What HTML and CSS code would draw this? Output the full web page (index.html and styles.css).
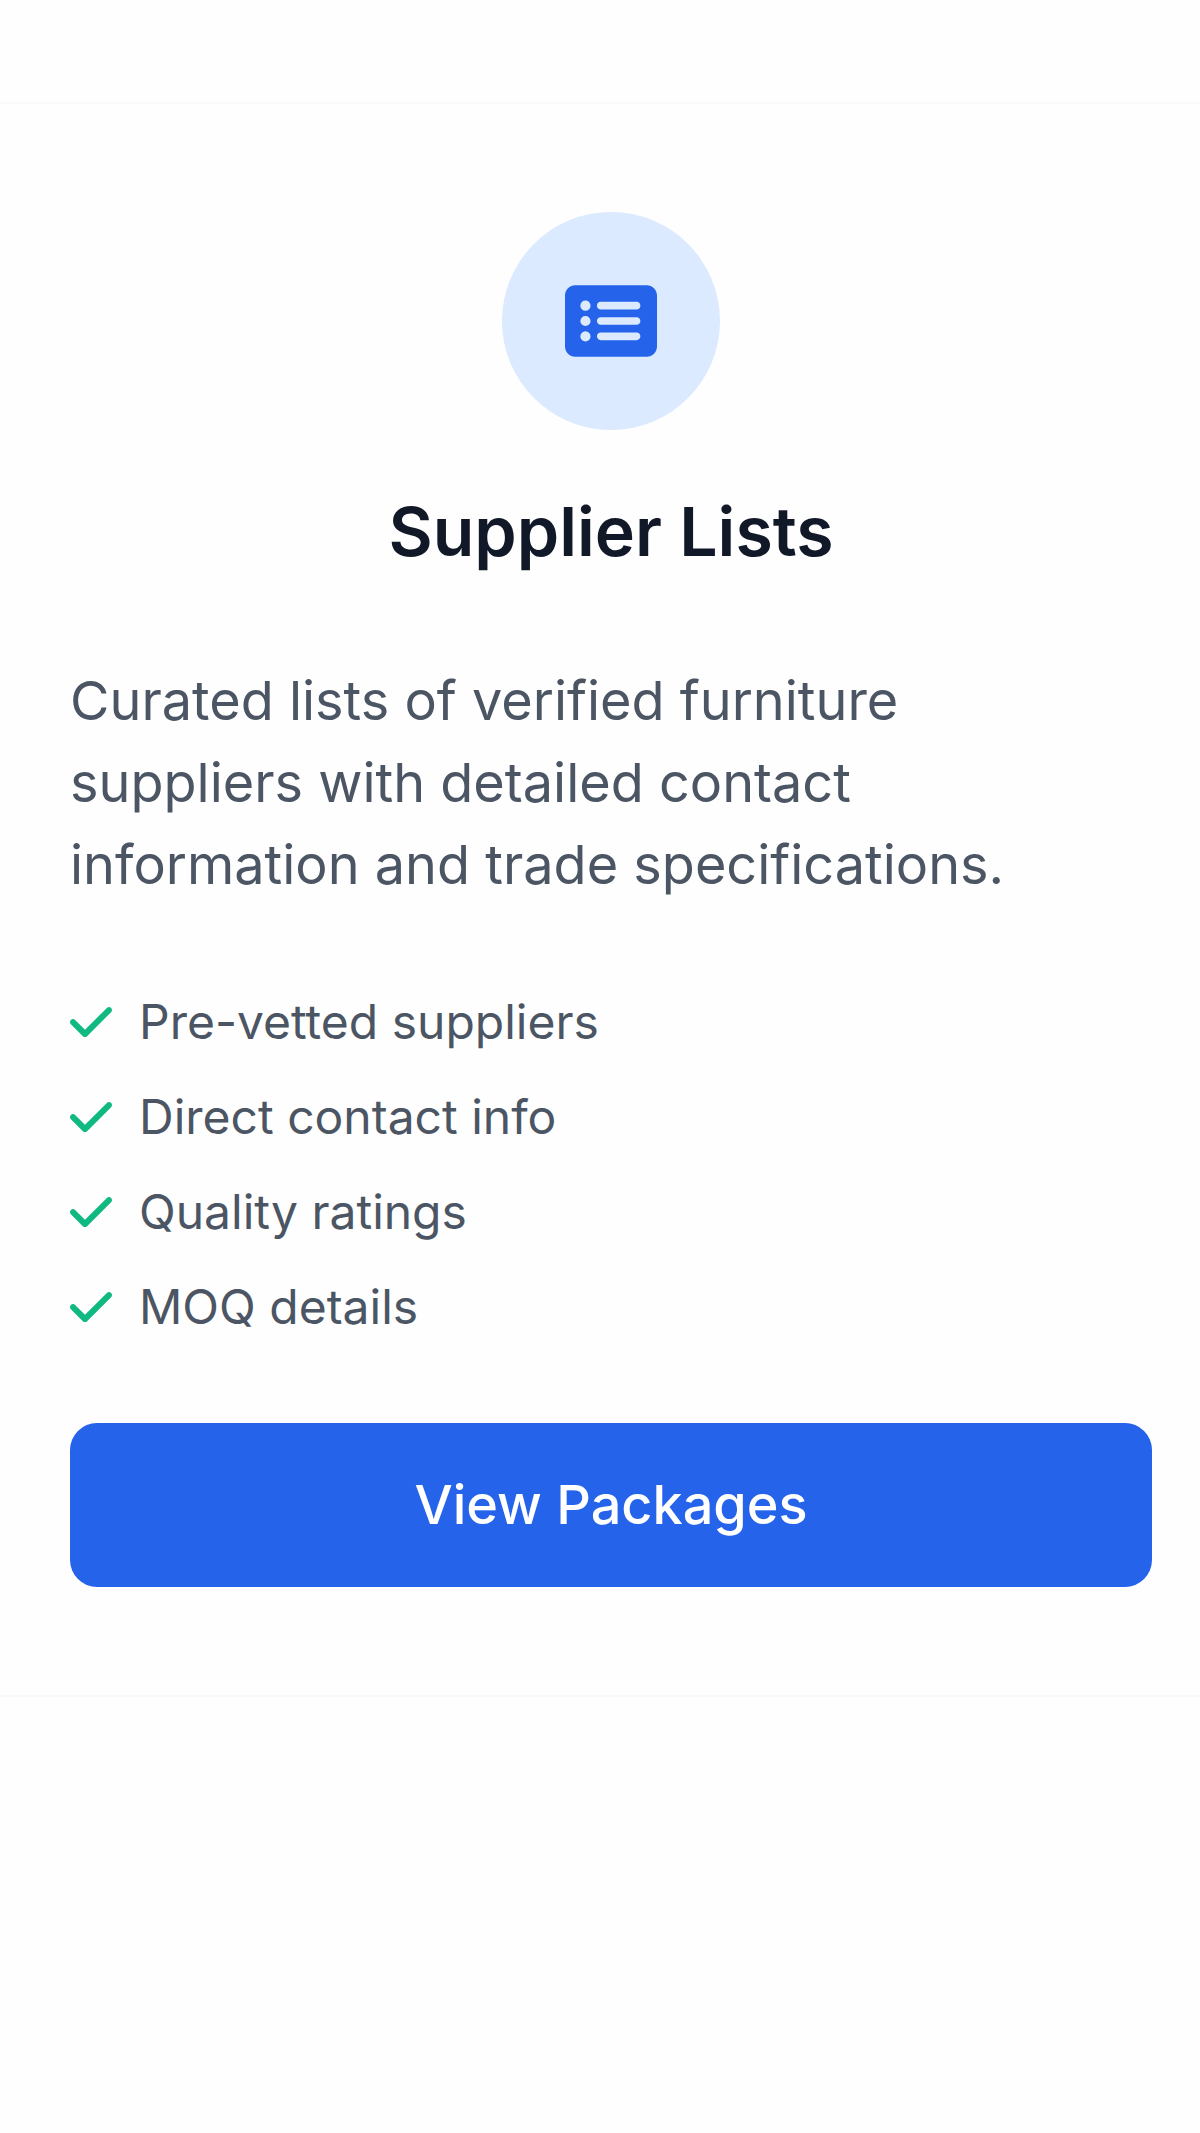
FILE: index.html
```html
<!DOCTYPE html>
<html lang="en">
<head>
    <meta charset="UTF-8">
    <meta name="viewport" content="width=device-width, initial-scale=1.0">
    <title>Supplier Lists</title>
    <link rel="stylesheet" href="styles.css">
</head>
<body>

    <!-- Supplier lists card -->
    <main class="card">
        <div class="card-icon">
            <svg viewBox="0 0 576 512" aria-hidden="true">
                <path fill="#2563eb" d="M0 96C0 60.700 28.700 32 64 32H512c35.300 0 64 28.700 64 64V416c0 35.300-28.700 64-64 64H64c-35.300 0-64-28.700-64-64V96zM128 288a32 32 0 1 0 0-64 32 32 0 1 0 0 64zm32-128a32 32 0 1 0-64 0 32 32 0 1 0 64 0zM128 384a32 32 0 1 0 0-64 32 32 0 1 0 0 64zm96-248c-13.300 0-24 10.700-24 24s10.700 24 24 24H448c13.300 0 24-10.700 24-24s-10.700-24-24-24H224zm0 96c-13.300 0-24 10.700-24 24s10.700 24 24 24H448c13.300 0 24-10.700 24-24s-10.700-24-24-24H224zm0 96c-13.300 0-24 10.700-24 24s10.700 24 24 24H448c13.300 0 24-10.700 24-24s-10.700-24-24-24H224z"/>
            </svg>
        </div>

        <h1>Supplier Lists</h1>

        <p class="description">Curated lists of verified furniture suppliers with detailed contact information and trade specifications.</p>

        <ul class="features">
            <li><svg class="check" viewBox="0 0 448 512" aria-hidden="true"><path d="M438.600 105.400c12.500 12.500 12.500 32.800 0 45.300l-256 256c-12.500 12.500-32.800 12.500-45.300 0l-128-128c-12.500-12.500-12.500-32.800 0-45.300s32.800-12.500 45.300 0L160 338.700 393.400 105.400c12.500-12.500 32.800-12.500 45.300 0z"/></svg>Pre-vetted suppliers</li>
            <li><svg class="check" viewBox="0 0 448 512" aria-hidden="true"><path d="M438.600 105.400c12.500 12.500 12.500 32.800 0 45.300l-256 256c-12.500 12.500-32.800 12.500-45.300 0l-128-128c-12.500-12.500-12.500-32.800 0-45.300s32.800-12.500 45.300 0L160 338.700 393.400 105.400c12.500-12.500 32.800-12.500 45.300 0z"/></svg>Direct contact info</li>
            <li><svg class="check" viewBox="0 0 448 512" aria-hidden="true"><path d="M438.600 105.400c12.500 12.500 12.500 32.800 0 45.300l-256 256c-12.500 12.500-32.800 12.500-45.300 0l-128-128c-12.500-12.500-12.500-32.800 0-45.300s32.800-12.500 45.300 0L160 338.700 393.400 105.400c12.500-12.500 32.800-12.500 45.300 0z"/></svg>Quality ratings</li>
            <li><svg class="check" viewBox="0 0 448 512" aria-hidden="true"><path d="M438.600 105.400c12.500 12.500 12.500 32.800 0 45.300l-256 256c-12.500 12.500-32.800 12.500-45.300 0l-128-128c-12.500-12.500-12.500-32.800 0-45.300s32.800-12.500 45.300 0L160 338.700 393.400 105.400c12.500-12.500 32.800-12.500 45.300 0z"/></svg>MOQ details</li>
        </ul>

        <button type="button" class="view-button">View Packages</button>
    </main>

</body>
</html>
```
FILE: styles.css
```css
* {
    margin: 0;
    padding: 0;
    box-sizing: border-box;
}

body {
    font-family: Inter, sans-serif;
    background-color: #fefefe;
    color: #4b5563;
    padding-top: 102px;
}

/* Card */
.card {
    display: flex;
    flex-direction: column;
    background-color: #fefefe;
    border-top: 2px solid #fafafa;
    border-bottom: 2px solid #fafafa;
    padding: 108px 48px 108px 70px;
}

.card-icon {
    display: flex;
    justify-content: center;
    align-items: center;
    align-self: center;
    width: 218px;
    height: 218px;
    border-radius: 50%;
    background-color: #dbeafe;
}

.card-icon svg {
    width: 92px;
    height: 82px;
}

h1 {
    margin-top: 60px;
    color: #111827;
    font-size: 68px;
    font-weight: 600;
    line-height: 82px;
    text-align: center;
}

.description {
    max-width: 1060px;
    margin-top: 88px;
    font-size: 54px;
    line-height: 82px;
}

/* Feature list */
.features {
    display: flex;
    flex-direction: column;
    gap: 27px;
    margin-top: 82px;
    list-style: none;
    font-size: 48px;
    line-height: 68px;
}

.features li {
    display: flex;
    align-items: center;
    gap: 27px;
}

.check {
    width: 42px;
    height: 48px;
    fill: #10b981;
}

.view-button {
    margin-top: 82px;
    padding: 41px;
    border: none;
    border-radius: 27px;
    background-color: #2563eb;
    color: #fff;
    font-family: inherit;
    font-size: 54px;
    font-weight: 500;
    line-height: 82px;
    cursor: pointer;
}
```
